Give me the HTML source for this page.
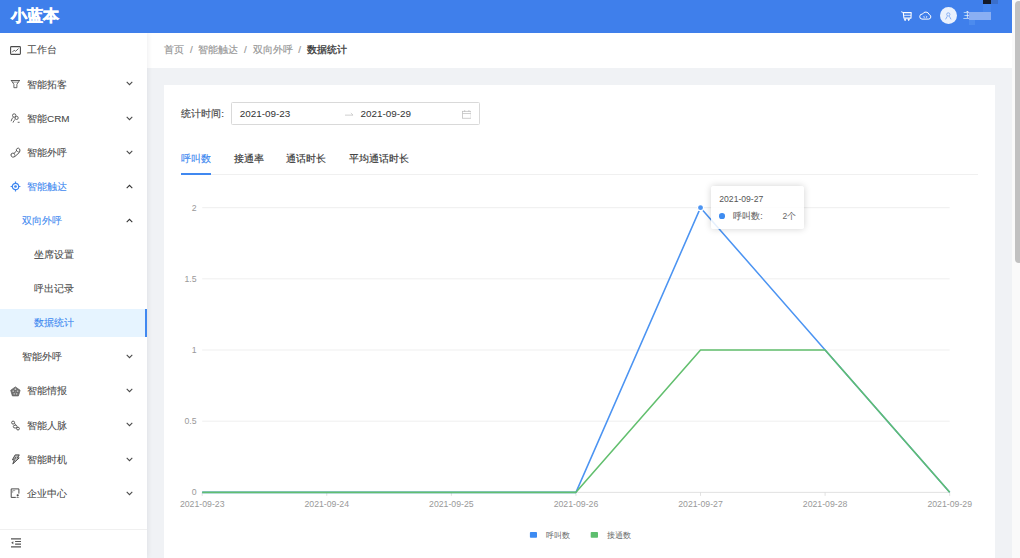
<!DOCTYPE html>
<html><head><meta charset="utf-8">
<style>
*{box-sizing:border-box;margin:0;padding:0}
html,body{width:1020px;height:558px;overflow:hidden;background:#fff;font-family:"Liberation Sans",sans-serif;-webkit-font-smoothing:antialiased}
.mi,#bc,#lab,.tab{-webkit-text-stroke:0.15px currentColor}
.mi{-webkit-text-stroke:0.08px currentColor}
.abs{position:absolute}
#header{position:absolute;left:0;top:0;width:1012px;height:32.5px;z-index:5;background:#3F7FEB}
#logo{position:absolute;left:11.2px;top:4.6px;color:#fff;font-size:16px;font-weight:bold;letter-spacing:-0.2px;line-height:22px;-webkit-text-stroke:0.5px #fff}
#sider{position:absolute;left:0;top:32.4px;width:146.7px;height:526px;background:#fff;z-index:3;box-shadow:1px 0 5px rgba(0,21,41,0.07)}
.mi{position:absolute;left:0;width:146.7px;height:28.4px;font-size:9.9px;color:#4a4a4a;line-height:28.4px}
.mi .t{position:absolute;left:27.5px;top:0.7px}
.mi .ic{position:absolute;left:10px;top:9px;width:11px;height:11px}
.chev{position:absolute;left:126.3px;top:11.6px;width:7px;height:5px;color:#4a4a4a}
#main{position:absolute;left:146.7px;top:32.4px;width:865.3px;height:526px;background:#F0F2F5}
#bc{position:absolute;left:0;top:0;width:865.3px;height:35.6px;background:#fff;font-size:9.9px;line-height:35.6px;color:#969696;padding-left:17.7px}
#card{position:absolute;left:17px;top:52.6px;width:831px;height:480px;background:#fff}
.mi.act{color:#4088F0}
.mi.act .chev{color:#333}
.mi.sel{color:#4088F0;background:#E6F4FF}
.mi .bar{position:absolute;right:0;top:0;width:2.1px;height:28.4px;background:#4088F0}
#sfoot{position:absolute;left:0;top:496.6px;width:146.7px;height:30px;border-top:0.7px solid #f0f0f0}

#bc .b{display:inline-block}
#bc .sep{display:inline-block;margin:0 5.67px}
#bc .cur{color:#3a3a3a;-webkit-text-stroke:0.3px #3a3a3a}
#lab{position:absolute;left:181.2px;top:107px;font-size:9.9px;line-height:14px;color:#4a4a4a}
#picker{position:absolute;left:231.2px;top:102.3px;width:249px;height:22.3px;border:0.7px solid #d9d9d9;border-radius:1.5px;background:#fff;font-size:9.9px;color:#333}
#d1{position:absolute;left:7.6px;top:4px;line-height:14px}
#d2{position:absolute;left:128.3px;top:4px;line-height:14px}
#arr{position:absolute;left:113px;top:9px}
#cal{position:absolute;left:229.4px;top:6.6px}
#tabs{position:absolute;left:0;top:0}
.tab{position:absolute;top:151.6px;font-size:9.9px;line-height:14px;color:#333;white-space:nowrap}
.tab.on{color:#4088F0}
#tabs::after{content:"";position:absolute;left:181.2px;top:173.9px;width:796.6px;height:0.7px;background:#f0f0f0}
#ink{position:absolute;left:181.2px;top:173.2px;width:29.8px;height:1.7px;background:#4088F0;z-index:2}
#tip{position:absolute;left:711px;top:186.2px;width:92.8px;height:42.6px;background:rgba(255,255,255,0.86);border-radius:2.5px;box-shadow:0 0 7px rgba(0,0,0,0.18);font-family:"Liberation Sans",sans-serif}
#tdate{position:absolute;left:8.3px;top:8.2px;font-size:8.6px;line-height:10px;color:#555}
#tdot{position:absolute;left:8.3px;top:27.1px;width:5.7px;height:5.7px;border-radius:50%;background:#3F8CF0}
#tname{position:absolute;left:22.3px;top:24.7px;font-size:8.5px;line-height:10px;color:#666;-webkit-text-stroke:0.1px #666}
#tval{position:absolute;left:71.4px;top:24.7px;font-size:8.5px;line-height:10px;color:#666}
#sb{position:absolute;left:1012px;top:0;width:8px;height:558px;background:#fafafa}
#thumb{position:absolute;left:1015.3px;top:1px;width:8px;height:262px;background:#c1c1c1;border-radius:4px}
</style></head>
<body>
<div id="header">
  <div id="logo">小蓝本</div>
  <svg class="abs" style="left:900.5px;top:10.5px" width="11" height="10.5" viewBox="0 0 11 10.5"><path d="M0.2 0.6 L2.3 1.6 L2.9 7.1 H10 L10.2 1.6 H2.3" fill="none" stroke="#fff" stroke-width="1.05" stroke-linejoin="round"/><path d="M2.6 4.3H10.1" stroke="#fff" stroke-width="0.8"/><path d="M3.2 8 H5 L4.1 9.9 Z M6.8 8 H8.6 L7.7 9.9 Z" fill="#fff" stroke="#fff" stroke-width="0.6" stroke-linejoin="round"/></svg>
  <svg class="abs" style="left:919.4px;top:10.8px" width="12.6" height="9" viewBox="0 0 12.6 9"><path d="M3 8.1H9.7A2.3 2.3 0 0 0 10.2 3.6A3.6 3.6 0 0 0 3.5 3.1A2.5 2.5 0 0 0 3 8.1Z" fill="none" stroke="#fff" stroke-width="1"/><path d="M5.6 4.9L4.6 5.9L5.6 6.9M7 4.9L8 5.9L7 6.9" fill="none" stroke="#fff" stroke-width="0.75"/></svg>
  <div class="abs" style="left:939.7px;top:6.9px;width:17.4px;height:17.4px;border-radius:50%;background:#EAF1FD"></div>
  <svg class="abs" style="left:944px;top:11.5px" width="9" height="8" viewBox="0 0 9 8"><circle cx="4.3" cy="2.4" r="1.6" fill="none" stroke="#7FA9F2" stroke-width="0.9"/><path d="M1.6 7.3L3.3 4.2M7 7.3L5.3 4.2" fill="none" stroke="#7FA9F2" stroke-width="0.9"/></svg>
  <div class="abs" style="left:983px;top:0;width:8px;height:3.7px;background:#141a28"></div>
  <div class="abs" style="left:991px;top:0;width:7px;height:3.7px;background:#3A6FCC"></div>
  <div class="abs" style="left:983px;top:3.7px;width:8px;height:8.1px;background:#4686EE"></div>
  <div class="abs" style="left:969px;top:11.8px;width:22px;height:7.9px;background:#8AAFF3"></div>
  <div class="abs" style="left:969px;top:19.7px;width:6px;height:5.7px;background:#4C8BEE"></div>
  <div class="abs" style="left:963px;top:11px;width:6px;height:8.5px;color:#fff;font-size:9px;line-height:9px;overflow:hidden">主</div>
</div>
<div id="sider">
<div class="mi" style="top:3.40px"><svg class="ic" viewBox="0 0 11 11"><rect x="0.6" y="1.6" width="9.8" height="7.8" rx="0.8" fill="none" stroke="currentColor" stroke-width="1.1"/><path d="M2.3 7.2 L4.2 5.2 L5.6 6.3 L8.5 3.6" fill="none" stroke="currentColor" stroke-width="0.9"/></svg><span class="t" style="left:27.1px">工作台</span></div>
<div class="mi" style="top:37.50px"><svg class="ic" viewBox="0 0 11 11"><path d="M0.9 1.5H9.9" stroke="currentColor" stroke-width="0.9"/><path d="M1.3 1.5 L3.9 5.3 V8.7 H6.9 V5.3 L9.5 1.5" fill="none" stroke="currentColor" stroke-width="0.85" stroke-linejoin="round"/><path d="M2.4 3.1H8.4" stroke="currentColor" stroke-width="0.6"/></svg><span class="t" style="left:27.1px">智能拓客</span><svg class="chev" viewBox="0 0 7 5"><path d="M0.7 0.9 L3.5 3.7 L6.3 0.9" fill="none" stroke="currentColor" stroke-width="1.05"/></svg></div>
<div class="mi" style="top:71.60px"><svg class="ic" viewBox="0 0 11 11"><circle cx="4.2" cy="2.5" r="1.7" fill="none" stroke="currentColor" stroke-width="0.85"/><circle cx="6.6" cy="4.9" r="1.6" fill="none" stroke="currentColor" stroke-width="0.85"/><path d="M1.1 8.2 Q1.7 5.6 3.2 4.3 M3 9.6 Q3.6 7.4 5.2 6.4" fill="none" stroke="currentColor" stroke-width="0.85"/><path d="M7.7 9.3H9.6" stroke="currentColor" stroke-width="0.85"/></svg><span class="t" style="left:27.1px">智能CRM</span><svg class="chev" viewBox="0 0 7 5"><path d="M0.7 0.9 L3.5 3.7 L6.3 0.9" fill="none" stroke="currentColor" stroke-width="1.05"/></svg></div>
<div class="mi" style="top:105.70px"><svg class="ic" viewBox="0 0 11 11"><path d="M1.1 6.5 Q0.4 8.7 2.4 9.5 Q3.9 9.9 5.3 8.7 L9.2 5.1 Q10.4 3.6 9.7 1.6 Q8.7 0.1 7.2 0.9 Q6 1.7 6.5 3.5 L4.1 5.8 Q2.2 5.3 1.1 6.5 Z" fill="none" stroke="currentColor" stroke-width="0.95" stroke-linejoin="round" transform="translate(0 0.5)"/><path d="M4.2 6.3 L5.1 8.9 M6.7 4 L9.2 5.4" stroke="currentColor" stroke-width="0.7"/></svg><span class="t" style="left:27.1px">智能外呼</span><svg class="chev" viewBox="0 0 7 5"><path d="M0.7 0.9 L3.5 3.7 L6.3 0.9" fill="none" stroke="currentColor" stroke-width="1.05"/></svg></div>
<div class="mi act" style="top:139.80px"><svg class="ic" viewBox="0 0 11 11"><circle cx="5.5" cy="5.5" r="3.2" fill="none" stroke="currentColor" stroke-width="1.2"/><circle cx="5.5" cy="5.5" r="1.35" fill="currentColor"/><path d="M5.5 0.6V2.3M5.5 8.7V10.4M0.6 5.5H2.3M8.7 5.5H10.4" stroke="currentColor" stroke-width="1.2"/></svg><span class="t" style="left:27.1px">智能触达</span><svg class="chev" viewBox="0 0 7 5"><path d="M0.7 4.1 L3.5 1.3 L6.3 4.1" fill="none" stroke="currentColor" stroke-width="1.05"/></svg></div>
<div class="mi act" style="top:173.90px"><span class="t" style="left:21.8px">双向外呼</span><svg class="chev" viewBox="0 0 7 5"><path d="M0.7 4.1 L3.5 1.3 L6.3 4.1" fill="none" stroke="currentColor" stroke-width="1.05"/></svg></div>
<div class="mi" style="top:208.00px"><span class="t" style="left:33.9px">坐席设置</span></div>
<div class="mi" style="top:242.10px"><span class="t" style="left:33.9px">呼出记录</span></div>
<div class="mi sel" style="top:276.20px"><span class="t" style="left:33.9px">数据统计</span><i class="bar"></i></div>
<div class="mi" style="top:310.30px"><span class="t" style="left:21.8px">智能外呼</span><svg class="chev" viewBox="0 0 7 5"><path d="M0.7 0.9 L3.5 3.7 L6.3 0.9" fill="none" stroke="currentColor" stroke-width="1.05"/></svg></div>
<div class="mi" style="top:344.40px"><svg class="ic" viewBox="0 0 11 11"><path d="M5.4 0.9 L10.1 4.3 L8.4 9.9 H2.4 L0.7 4.3 Z" fill="#6e6e6e" stroke="#666" stroke-width="0.8" stroke-linejoin="round"/><circle cx="5.4" cy="3.2" r="0.9" fill="#c8c8c8"/><circle cx="3.2" cy="5.2" r="0.85" fill="#bbb"/><circle cx="7.6" cy="5.2" r="0.85" fill="#bbb"/><circle cx="4.2" cy="7.8" r="0.85" fill="#bbb"/><circle cx="6.6" cy="7.8" r="0.85" fill="#bbb"/><circle cx="5.4" cy="5.8" r="0.6" fill="#999"/></svg><span class="t" style="left:27.1px">智能情报</span><svg class="chev" viewBox="0 0 7 5"><path d="M0.7 0.9 L3.5 3.7 L6.3 0.9" fill="none" stroke="currentColor" stroke-width="1.05"/></svg></div>
<div class="mi" style="top:378.50px"><svg class="ic" viewBox="0 0 11 11"><circle cx="3.1" cy="2.6" r="1.5" fill="none" stroke="currentColor" stroke-width="0.9"/><ellipse cx="5.2" cy="6.6" rx="1.9" ry="1.45" fill="none" stroke="currentColor" stroke-width="0.9"/><circle cx="8" cy="8.6" r="1.4" fill="none" stroke="currentColor" stroke-width="0.9"/><path d="M4.4 3.3 L6.3 5.1" fill="none" stroke="currentColor" stroke-width="0.8"/></svg><span class="t" style="left:27.1px">智能人脉</span><svg class="chev" viewBox="0 0 7 5"><path d="M0.7 0.9 L3.5 3.7 L6.3 0.9" fill="none" stroke="currentColor" stroke-width="1.05"/></svg></div>
<div class="mi" style="top:412.60px"><svg class="ic" viewBox="0 0 11 11"><path d="M5.2 0.9 H9.3 L7.4 3.9 H9.2 L2.8 9.9 L4.4 5.8 H2.4 Z" fill="#bbb" stroke="currentColor" stroke-width="1" stroke-linejoin="round"/><path d="M5.8 3.1 L4.8 5" stroke="currentColor" stroke-width="0.9"/></svg><span class="t" style="left:27.1px">智能时机</span><svg class="chev" viewBox="0 0 7 5"><path d="M0.7 0.9 L3.5 3.7 L6.3 0.9" fill="none" stroke="currentColor" stroke-width="1.05"/></svg></div>
<div class="mi" style="top:446.70px"><svg class="ic" viewBox="0 0 11 11"><path d="M5.8 9.4 H1.2 V0.9 H8.9 V5.6" fill="none" stroke="currentColor" stroke-width="1"/><path d="M2.7 2.6 H5.2 M2.7 2.6 V4.8" stroke="#999" stroke-width="0.9"/><circle cx="7.7" cy="7.3" r="1.1" fill="currentColor"/><path d="M5.9 10.1 Q7.7 8.2 9.5 10.1 Z" fill="currentColor"/></svg><span class="t" style="left:27.1px">企业中心</span><svg class="chev" viewBox="0 0 7 5"><path d="M0.7 0.9 L3.5 3.7 L6.3 0.9" fill="none" stroke="currentColor" stroke-width="1.05"/></svg></div>
<div id="sfoot"><svg viewBox="0 0 11 10" style="position:absolute;left:10.7px;top:8.3px;width:10.5px;height:10px"><path d="M0 0.7H10.5M4.3 3.4H10.5M4.3 6.2H10.5M0 9H10.5" stroke="#555" stroke-width="1.2"/><path d="M0.2 4.8 L2.4 3.2 V6.4 Z" fill="#555"/></svg></div>
</div>
<div id="main">
  <div id="bc"><span class="b">首页</span><span class="sep">/</span><span class="b">智能触达</span><span class="sep">/</span><span class="b">双向外呼</span><span class="sep">/</span><span class="b cur">数据统计</span></div>
  <div id="card"></div>
</div>
<svg id="chart" width="1020" height="558" viewBox="0 0 1020 558" style="position:absolute;left:0;top:0">
<line x1="202.2" y1="421.18" x2="949.7" y2="421.18" stroke="#ebebeb" stroke-width="0.8"/><line x1="202.2" y1="350.01" x2="949.7" y2="350.01" stroke="#ebebeb" stroke-width="0.8"/><line x1="202.2" y1="278.84" x2="949.7" y2="278.84" stroke="#ebebeb" stroke-width="0.8"/><line x1="202.2" y1="207.67" x2="949.7" y2="207.67" stroke="#ebebeb" stroke-width="0.8"/><line x1="202.2" y1="492.35" x2="949.7" y2="492.35" stroke="#d9d9d9" stroke-width="0.8"/><line x1="202.20" y1="492.35" x2="202.20" y2="495.85" stroke="#d9d9d9" stroke-width="0.8"/><line x1="326.78" y1="492.35" x2="326.78" y2="495.85" stroke="#d9d9d9" stroke-width="0.8"/><line x1="451.37" y1="492.35" x2="451.37" y2="495.85" stroke="#d9d9d9" stroke-width="0.8"/><line x1="575.95" y1="492.35" x2="575.95" y2="495.85" stroke="#d9d9d9" stroke-width="0.8"/><line x1="700.53" y1="492.35" x2="700.53" y2="495.85" stroke="#d9d9d9" stroke-width="0.8"/><line x1="825.12" y1="492.35" x2="825.12" y2="495.85" stroke="#d9d9d9" stroke-width="0.8"/><line x1="949.70" y1="492.35" x2="949.70" y2="495.85" stroke="#d9d9d9" stroke-width="0.8"/>
<g font-family="Liberation Sans, sans-serif" font-size="8.72" fill="#999"><text x="196.6" y="495.35" text-anchor="end">0</text><text x="196.6" y="424.18" text-anchor="end">0.5</text><text x="196.6" y="353.01" text-anchor="end">1</text><text x="196.6" y="281.84" text-anchor="end">1.5</text><text x="196.6" y="210.67" text-anchor="end">2</text><text x="202.20" y="506.6" text-anchor="middle">2021-09-23</text><text x="326.78" y="506.6" text-anchor="middle">2021-09-24</text><text x="451.37" y="506.6" text-anchor="middle">2021-09-25</text><text x="575.95" y="506.6" text-anchor="middle">2021-09-26</text><text x="700.53" y="506.6" text-anchor="middle">2021-09-27</text><text x="825.12" y="506.6" text-anchor="middle">2021-09-28</text><text x="949.70" y="506.6" text-anchor="middle">2021-09-29</text></g>
<polyline points="202.20,492.35 326.78,492.35 451.37,492.35 575.95,492.35 700.53,207.67 825.12,350.01 949.70,492.35" fill="none" stroke="#4C94F2" stroke-width="1.55" stroke-linejoin="round"/>
<polyline points="202.20,492.35 326.78,492.35 451.37,492.35 575.95,492.35 700.53,350.01 825.12,350.01 949.70,492.35" fill="none" stroke="#62BF6E" stroke-width="1.55" stroke-linejoin="round"/>
<circle cx="700.53" cy="207.67" r="3.0" fill="#4C94F2" stroke="#fff" stroke-width="1.1"/>
<rect x="529.9" y="532.1" width="7.1" height="5.7" rx="0.8" fill="#3D8BF2"/>
<rect x="590.7" y="532.1" width="7.3" height="5.7" rx="0.8" fill="#5DBE6E"/>
<g font-family="Liberation Sans, sans-serif" font-size="8.45" fill="#666"><text x="546.1" y="538.1">呼叫数</text><text x="606.9" y="538.1">接通数</text></g>
</svg>
<div id="lab">统计时间:</div>
<div id="picker"><span id="d1">2021-09-23</span><svg id="arr" viewBox="0 0 9 4" width="8.5" height="4"><path d="M0 3.2H8.5L6.2 1" fill="none" stroke="#bfbfbf" stroke-width="0.8"/></svg><span id="d2">2021-09-29</span>
<svg id="cal" viewBox="0 0 10 9" width="9.6" height="8.8"><rect x="0.5" y="1.3" width="9" height="7.2" fill="none" stroke="#bfbfbf" stroke-width="0.8"/><path d="M0.5 3.6H9.5M2.8 0V2M7.2 0V2" stroke="#bfbfbf" stroke-width="0.8"/></svg></div>
<div id="tabs"><span class="tab on" style="left:181.2px">呼叫数</span><span class="tab" style="left:233.9px">接通率</span><span class="tab" style="left:286px">通话时长</span><span class="tab" style="left:348.6px">平均通话时长</span><i id="ink"></i></div>
<div id="tip"><div id="tdate">2021-09-27</div><i id="tdot"></i><span id="tname">呼叫数:</span><span id="tval">2个</span></div>
<div id="sb"></div><div id="thumb"></div>
</body></html>
